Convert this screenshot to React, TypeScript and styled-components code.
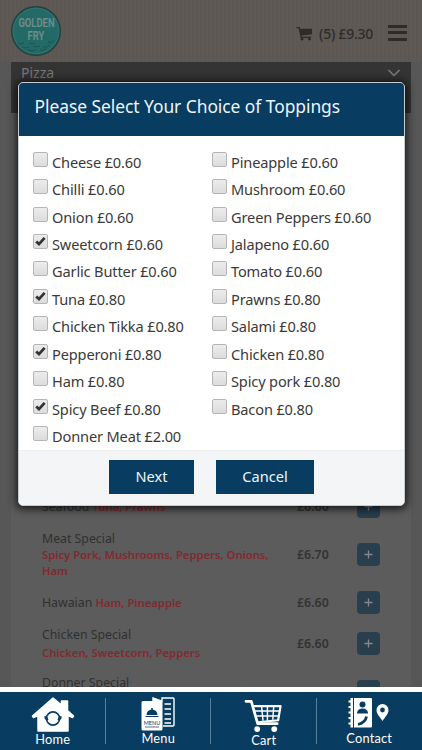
import React from "react";
import styled, { createGlobalStyle, css } from "styled-components";

const NAVY = "#083d61";

const Global = createGlobalStyle`
  * { box-sizing: border-box; }
  html, body { margin: 0; padding: 0; }
  body { font-family: "Noto Sans", "Open Sans", sans-serif; background: #575757; }
  button { font-family: inherit; border: 0; padding: 0; }
`;

const Screen = styled.div`
  position: relative;
  width: 422px;
  height: 750px;
  overflow: hidden;
  display: flex;
  flex-direction: column;
`;

const Header = styled.header`
  flex: none;
  height: 62px;
  padding: 0 15px 0 11px;
  display: flex;
  align-items: center;
  background:
    repeating-linear-gradient(90deg, rgba(0, 0, 0, 0.025) 0 1px, transparent 1px 4px),
    repeating-linear-gradient(0deg, rgba(0, 0, 0, 0.015) 0 1px, transparent 1px 5px),
    #5e5955;
`;

const Logo = styled.svg`
  display: block;
  flex: none;
  margin-bottom: 1px;
`;

const Basket = styled.div`
  margin: 5px 15px 0 auto;
  display: flex;
  align-items: center;
  gap: 6px;
  color: #2d2c2b;
  font-size: 14px;
  font-weight: 500;
  line-height: 20px;
  letter-spacing: -0.25px;
`;

const Burger = styled.div`
  width: 19px;
  height: 16px;
  margin-top: 3px;
  display: flex;
  flex-direction: column;
  justify-content: space-between;
`;

const BurgerLine = styled.span`
  height: 3px;
  background: #2d2c2b;
`;

const Content = styled.main`
  flex: 1;
  min-height: 0;
  margin: 0 11px;
  background: #5c5c5c;
  overflow: hidden;
`;

const CategoryBar = styled.div`
  height: 51px;
  padding: 0 10px;
  display: flex;
  justify-content: space-between;
  background: #343434;
  color: #777;
  font-size: 14px;
  line-height: 21px;

  svg { margin-top: 6px; }
`;

const Dishes = styled.div`
  padding-top: 375px;
`;

const Dish = styled.div<{ $height: number }>`
  height: ${(p) => p.$height}px;
  padding: 0 31px;
  display: grid;
  grid-template-columns: 235px 1fr 23px;
  align-items: center;
`;

const DishText = styled.div`
  padding-top: 1px;
  font-size: 12.3px;
  line-height: 16px;
  color: #303030;
  white-space: nowrap;
`;

const DishName = styled.span<{ $block?: boolean; $gap?: number }>`
  display: ${(p) => (p.$block ? "block" : "inline")};
  margin-bottom: ${(p) => p.$gap || 0}px;
`;

const Extras = styled.span`
  color: #842830;
  font-size: 11.25px;
  font-weight: 600;
  white-space: pre-line;
`;

const Price = styled.div`
  padding-left: 20px;
  font-size: 12.4px;
  font-weight: 600;
  color: #333;
`;

const AddButton = styled.button`
  width: 23px;
  height: 23px;
  border-radius: 4px;
  background: #293f4e;
  display: flex;
  align-items: center;
  justify-content: center;
`;

const Dialog = styled.section`
  position: absolute;
  left: 18px;
  top: 82px;
  width: 387px;
  height: 424px;
  border: 1px solid #c4ccd2;
  border-radius: 5px;
  overflow: hidden;
  display: flex;
  flex-direction: column;
  background: #fff;
  box-shadow: 0 1px 8px 2px rgba(0, 0, 0, 0.75);
`;

const DialogTitle = styled.h2`
  flex: none;
  height: 53px;
  margin: 0;
  padding: 9px 15.5px 0;
  background: ${NAVY};
  color: #eef5fa;
  font-size: 17.4px;
  font-weight: 400;
  line-height: 29px;
  letter-spacing: -0.04px;
  white-space: nowrap;
`;

const Toppings = styled.div`
  flex: 1;
  padding: 12px 14px 0;
  display: grid;
  grid-template-columns: 179px 1fr;
  grid-auto-rows: 27.45px;
`;

const Topping = styled.label`
  display: flex;
  align-items: center;
  gap: 4px;
  color: #3a3a3a;
  font-size: 14.6px;
  letter-spacing: -0.15px;
  white-space: nowrap;
`;

const Box = styled.span`
  width: 15px;
  height: 15px;
  margin-top: -5px;
  border: 1px solid #b5b5b5;
  border-radius: 2px;
  background: linear-gradient(#ececec, #dcdcdc);
  display: block;

  svg { display: block; margin: 0; }
`;

const DialogFooter = styled.footer`
  flex: none;
  height: 57px;
  padding: 9px 0 0;
  display: flex;
  justify-content: center;
  gap: 22px;
  background: #f4f5f7;
  border-top: 1px solid #eeeeef;
`;

const Action = styled.button<{ $width: number }>`
  width: ${(p) => p.$width}px;
  height: 34px;
  background: ${NAVY};
  color: #eef5fa;
  font-size: 14.6px;
  line-height: 32px;
  padding-bottom: 2px;
`;

const NavBar = styled.nav`
  position: absolute;
  left: 0;
  right: 0;
  bottom: 0;
  height: 63px;
  border-top: 5px solid #fff;
  background: ${NAVY};
  display: grid;
  grid-template-columns: repeat(4, 105.5px);
`;

const NavItem = styled.a<{ $first?: boolean; $lift?: number }>`
  position: relative;
  display: flex;
  flex-direction: column;
  align-items: center;
  color: #fff;
  font-family: Lato, sans-serif;
  font-size: 12.8px;
  line-height: 14px;
  letter-spacing: 0.2px;

  svg { display: block; height: 40px; }
  span { margin-top: ${(p) => -(p.$lift || 0)}px; }

  ${(p) =>
    !p.$first &&
    css`
      &::before {
        content: "";
        position: absolute;
        left: -1px;
        top: 6px;
        width: 1px;
        height: 46px;
        background: #58819b;
      }
    `}
`;

const BrandLogo = () => (
  <Logo width="51" height="52" viewBox="0 0 51 52">
    <circle cx="25" cy="26" r="24.3" fill="#236a67" stroke="#253e3e" strokeWidth="1.4" />
    <circle cx="25" cy="26" r="22.8" fill="none" stroke="#3c7472" strokeWidth=".7" />
    <g fontFamily="Roboto, sans-serif" fontWeight="600" fill="#708e8b" textAnchor="middle">
      <text x="0" y="0" fontSize="13.5" transform="translate(25.5 22) scale(.7 1)">GOLDEN</text>
      <text x="0" y="0" fontSize="13.5" transform="translate(25 35) scale(.7 1)">FRY</text>
    </g>
    <path d="M7 38q3 2 6 0m5 0q3 2 6 0m13-1q3 2 6-1M11 42q4 2 7 0m4-1q4 2 7 0m3 1q4 1 7-2M17 45q4 2 8 0m4 0q3 1 6-1" fill="none" stroke="#1c5452" strokeWidth="1" />
  </Logo>
);

const SmallCart = () => (
  <svg width="17" height="15" viewBox="0 0 17 15" fill="currentColor">
    <path d="M.5 1h3.2l.5 1.7H16v5.5L5.7 9.6l.2 1.1H15V12H4.7L2.6 2.3H.5z" />
    <circle cx="6" cy="13.2" r="1.4" />
    <circle cx="13.5" cy="13.2" r="1.4" />
  </svg>
);

const Chevron = () => (
  <svg width="14" height="10" viewBox="0 0 14 10" fill="none" stroke="#777" strokeWidth="1.7">
    <path d="M1.5 2 7 7.5 12.5 2" />
  </svg>
);

const Plus = () => (
  <svg width="9" height="9" viewBox="0 0 9 9" stroke="#82898e" strokeWidth="1.3">
    <path d="M4.5.5v8M.5 4.5h8" />
  </svg>
);

const Tick = () => (
  <svg width="13" height="13" viewBox="0 0 13 13" fill="none" stroke="#333" strokeWidth="2.8">
    <path d="M2.2 6.5 5 9.1 10.6 2.9" />
  </svg>
);

const HomeIcon = () => (
  <svg width="44" height="40" viewBox="0 0 44 40">
    <path d="M22 6 1.5 24l1 1.5L7 23.5V39h30V23.5l4.5 2 1-1.5-6-5.500V9h-6v4z" fill="#fff" stroke="#fff" strokeWidth="1.5" strokeLinejoin="round" />
    <circle cx="22" cy="26.5" r="6.6" fill="none" stroke={NAVY} strokeWidth="1.6" />
    <path d="m13.5 24 2.500.5 1.500 3-1.500 1.500-2.500-2.500zm17 0-2.500.5-1.500 3 1.500 1.500 2.500-2.500z" fill={NAVY} />
  </svg>
);

const MenuIcon = () => (
  <svg width="38" height="40" viewBox="0 0 38 40">
    <path d="M14 9V6l9 3.2V6h11q1 0 1 1v26q0 1-1 1H24" fill="none" stroke="#fff" strokeWidth="1.4" />
    <path d="M14 9.5V5.5L22 9zM4 9h18q1.500 0 1.500 1.500v26.500q0 1.500-1.500 1.500H4q-1.500 0-1.500-1.500v-26.500Q2.500 9 4 9z" fill="#fff" />
    <path d="M25.5 12h6.500m-6.500 5h6.500m-6.500 5h6.500m-6.500 5h6.500m-6.500 4h6.500" stroke="#fff" strokeWidth="1.3" />
    <path d="M7.5 23a5.500 5.500 0 0 1 11 0zM6.500 24h13v1h-13z" fill={NAVY} />
    <circle cx="13" cy="17" r="1.1" fill={NAVY} />
    <text x="13" y="33" textAnchor="middle" fontFamily="Lato, sans-serif" fontSize="5.5" letterSpacing="0" fill={NAVY}>MENU</text>
    <path d="M6 35h14" stroke={NAVY} strokeWidth=".7" />
  </svg>
);

const CartIcon = () => (
  <svg width="40" height="41" viewBox="0 0 40 41" fill="none" stroke="#fff">
    <path d="M1.5 9.5H7L13.5 32.5h20" strokeWidth="2.8" strokeLinecap="round" strokeLinejoin="round" />
    <path d="M9 14.5h28l-2.500 14.500-21 2" strokeWidth="2.2" strokeLinejoin="round" />
    <path d="M10 19.5h26M12 24.5h23M17.5 14.5l1.500 15m4.500-15v15m6.500-15-1 14" strokeWidth="1.5" />
    <circle cx="13" cy="38" r="3" fill="#fff" stroke="none" />
    <circle cx="30.5" cy="38" r="3" fill="#fff" stroke="none" />
  </svg>
);

const ContactIcon = () => (
  <svg width="44" height="40" viewBox="0 0 44 40">
    <path d="M3.5 6H6v29.5H3.5zM7 6h17q1 0 1 1v27.500q0 1-1 1H7z" fill="#fff" />
    <path d="M1.5 9.5H5M1.5 15H5M1.5 20.5H5M1.5 26H5M1.5 31.5H5" stroke="#fff" strokeWidth="1.8" />
    <circle cx="15.5" cy="12.5" r="3" fill={NAVY} />
    <path d="M10 21.5v-1q1-4 5.500-4t5.500 4v1z" fill={NAVY} />
    <path d="M19.5 24.5q-1 6-8.500 8" fill="none" stroke={NAVY} strokeWidth="2.8" />
    <path d="M35.5 12a6 6 0 0 0-6 6c0 4 3.500 7 6 11 2.500-4 6-7 6-11a6 6 0 0 0-6-6z" fill="#fff" />
    <circle cx="35.5" cy="18" r="2.4" fill={NAVY} />
  </svg>
);

const toppings: [string, boolean?][] = [
  ["Cheese £0.60"], ["Pineapple £0.60"],
  ["Chilli £0.60"], ["Mushroom £0.60"],
  ["Onion £0.60"], ["Green Peppers £0.60"],
  ["Sweetcorn £0.60", true], ["Jalapeno £0.60"],
  ["Garlic Butter £0.60"], ["Tomato £0.60"],
  ["Tuna £0.80", true], ["Prawns £0.80"],
  ["Chicken Tikka £0.80"], ["Salami £0.80"],
  ["Pepperoni £0.80", true], ["Chicken £0.80"],
  ["Ham £0.80"], ["Spicy pork £0.80"],
  ["Spicy Beef £0.80", true], ["Bacon £0.80"],
  ["Donner Meat £2.00"],
];

const dishes = [
  { name: "Seafood", extras: "Tuna, Prawns", price: "£6.60", height: 36 },
  { name: "Meat Special", extras: "Spicy Pork, Mushrooms, Peppers, Onions,\nHam", price: "£6.70", height: 60, block: true },
  { name: "Hawaian", extras: "Ham, Pineapple", price: "£6.60", height: 36 },
  { name: "Chicken Special", extras: "Chicken, Sweetcorn, Peppers", price: "£6.60", height: 47, block: true, gap: 2 },
  { name: "Donner Special", extras: "Donner Meat, Onions", price: "£7.00", height: 48, block: true, gap: 2 },
];

export default function App() {
  return (
    <>
      <Global />
      <Screen>
        <Header>
          <BrandLogo />
          <Basket><SmallCart />(5) £9.30</Basket>
          <Burger><BurgerLine /><BurgerLine /><BurgerLine /></Burger>
        </Header>
        <Content>
          <CategoryBar>Pizza<Chevron /></CategoryBar>
          <Dishes>
            {dishes.map((d) => (
              <Dish key={d.name} $height={d.height}>
                <DishText>
                  <DishName $block={d.block} $gap={d.gap}>{d.name}</DishName>{" "}
                  <Extras>{d.extras}</Extras>
                </DishText>
                <Price>{d.price}</Price>
                <AddButton><Plus /></AddButton>
              </Dish>
            ))}
          </Dishes>
        </Content>
        <Dialog>
          <DialogTitle>Please Select Your Choice of Toppings</DialogTitle>
          <Toppings>
            {toppings.map(([label, checked]) => (
              <Topping key={label}>
                <Box>{checked && <Tick />}</Box>
                <span>{label}</span>
              </Topping>
            ))}
          </Toppings>
          <DialogFooter>
            <Action $width={85}>Next</Action>
            <Action $width={98}>Cancel</Action>
          </DialogFooter>
        </Dialog>
        <NavBar>
          <NavItem $first><HomeIcon /><span>Home</span></NavItem>
          <NavItem $lift={1}><MenuIcon /><span>Menu</span></NavItem>
          <NavItem $lift={-1}><CartIcon /><span>Cart</span></NavItem>
          <NavItem $lift={1}><ContactIcon /><span>Contact</span></NavItem>
        </NavBar>
      </Screen>
    </>
  );
}
